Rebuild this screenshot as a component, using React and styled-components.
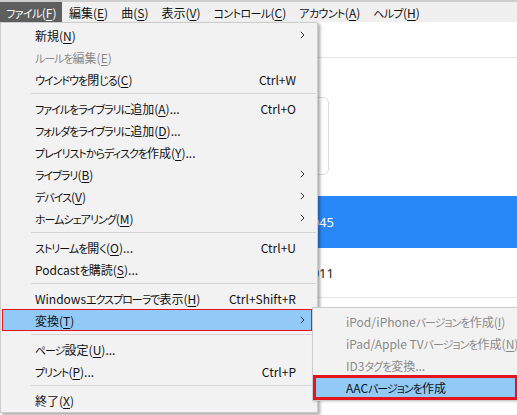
import styled, { createGlobalStyle } from 'styled-components';

const GlobalStyle = createGlobalStyle`
  html, body {
    margin: 0;
    padding: 0;
    background: #ffffff;
    overflow: hidden;
  }
  body {
    font-family: "Noto Sans CJK JP", "Noto Sans", sans-serif;
    font-size: 12px;
    font-feature-settings: "palt";
    color: #111;
  }
`;

const Window = styled.div`
  position: relative;
  width: 517px;
  height: 415px;
  display: flex;
  flex-direction: column;
  overflow: hidden;
  background: #fff;
`;

const TopStrip = styled.div`
  height: 2px;
  background: #cdcdcd;
`;

const MenuBar = styled.div`
  display: flex;
  height: 20px;
  background: #f0f0f0;
`;

const BarItem = styled.div`
  display: flex;
  align-items: center;
  padding: 0 ${p => p.$pad || '6.5px'};
  background: ${p => (p.$open ? '#5e5e5e' : 'transparent')};
  color: ${p => (p.$open ? '#fff' : '#111')};
  white-space: nowrap;
`;

const Toolbar = styled.div`
  height: 35px;
  border-bottom: 1px solid #e4e4e4;
`;

const InfoArea = styled.div`
  height: 138px;
  padding-top: 39px;
  box-sizing: border-box;
`;

const InfoBox = styled.div`
  width: 320px;
  height: 78px;
  margin-left: 9px;
  box-sizing: border-box;
  border: 1px solid #dcdcdc;
  border-radius: 6px;
`;

const ListRow = styled.div`
  height: ${p => p.$h}px;
  display: flex;
  align-items: center;
  box-sizing: border-box;
  background: ${p => (p.$selected ? '#2988f7' : '#fff')};
  color: ${p => (p.$selected ? '#fff' : '#222')};
  border-bottom: 1px solid ${p => (p.$selected ? '#2988f7' : '#e6e6e6')};
  font-family: "Noto Sans", sans-serif;
  font-size: 13px;
`;

const ListCell = styled.div`
  width: 334px;
  text-align: right;
  white-space: nowrap;
`;

const Menu = styled.div`
  position: absolute;
  left: 0;
  top: 22px;
  width: 318px;
  box-sizing: border-box;
  padding: 1px 1px;
  background: #f2f2f2;
  border: 1px solid #cccccc;
  box-shadow: 2px 2px 3px rgba(0, 0, 0, 0.35);
`;

const SubMenu = styled(Menu)`
  left: 312px;
  top: 307px;
  width: 210px;
  padding: 2px 0;
  box-shadow: 1px 1px 2px rgba(0, 0, 0, 0.15);
`;

const Row = styled.div`
  position: relative;
  height: 22px;
  display: flex;
  align-items: center;
  padding-left: 33px;
  white-space: nowrap;
  background: ${p => (p.$active ? '#91c9f7' : 'transparent')};
  color: ${p => (p.$disabled ? '#8a8a8a' : '#111')};

  &::after {
    content: '';
    display: ${p => (p.$mark ? 'block' : 'none')};
    position: absolute;
    top: ${p => (p.$mark === 'thick' ? '-1px' : '0')};
    bottom: ${p => (p.$mark === 'thick' ? '-2px' : '0')};
    left: 0;
    right: ${p => (p.$mark === 'thick' ? '3px' : '4px')};
    border: ${p => (p.$mark === 'thick' ? '3px' : '1px')} solid #e3141e;
  }
`;

const Shortcut = styled.span`
  margin-left: auto;
`;

const ArrowCell = styled.span`
  width: 20px;
  flex-shrink: 0;
  display: flex;
  align-items: center;
  padding-left: 4px;
  box-sizing: border-box;
`;

const Separator = styled.div`
  height: 7px;
  display: flex;
  align-items: center;
  padding-left: 29px;

  &::before {
    content: '';
    flex: 1;
    height: 1px;
    background: #d5d5d5;
  }
`;

const Key = styled.u`
  text-underline-offset: 2px;
`;

// kana in the original UI font are narrower than Noto's, so tighten them
const Kana = styled.span`
  font-size: 11px;
  letter-spacing: ${p => (p.$loose ? '-0.6px' : '-1px')};
`;

const Chevron = () => (
  <svg width="5" height="8" viewBox="0 0 5 8">
    <path d="M0.8 0.8 L4 4 L0.8 7.2" fill="none" stroke="#333" strokeWidth="1" />
  </svg>
);

const withKana = (text, loose) =>
  text.split(/([\u3040-\u30ff]+)/).map((part, i) =>
    /[\u3040-\u30ff]/.test(part) ? (
      <Kana key={i} $loose={loose}>
        {part}
      </Kana>
    ) : (
      part
    )
  );

const Label = ({ text, k, dots, loose }) => (
  <span>
    {withKana(text, loose)}
    {k && (
      <>
        (<Key>{k}</Key>)
      </>
    )}
    {dots && '...'}
  </span>
);

const barItems = [
  ['ファイル', 'F'],
  ['編集', 'E'],
  ['曲', 'S'],
  ['表示', 'V'],
  ['コントロール', 'C'],
  ['アカウント', 'A'],
  ['ヘルプ', 'H'],
];

const fileItems = [
  { label: '新規', k: 'N', sub: true },
  { label: 'ルールを編集', k: 'E', disabled: true },
  { label: 'ウインドウを閉じる', k: 'C', shortcut: 'Ctrl+W' },
  'sep',
  { label: 'ファイルをライブラリに追加', k: 'A', dots: true, shortcut: 'Ctrl+O' },
  { label: 'フォルダをライブラリに追加', k: 'D', dots: true },
  { label: 'プレイリストからディスクを作成', k: 'Y', dots: true },
  { label: 'ライブラリ', k: 'B', sub: true },
  { label: 'デバイス', k: 'V', sub: true },
  { label: 'ホームシェアリング', k: 'M', sub: true },
  'sep',
  { label: 'ストリームを開く', k: 'O', dots: true, shortcut: 'Ctrl+U' },
  { label: 'Podcastを購読', k: 'S', dots: true },
  'sep',
  { label: 'Windowsエクスプローラで表示', k: 'H', shortcut: 'Ctrl+Shift+R' },
  { label: '変換', k: 'T', sub: true, active: true, mark: 'thin' },
  'sep',
  { label: 'ページ設定', k: 'U', dots: true },
  { label: 'プリント', k: 'P', dots: true, shortcut: 'Ctrl+P' },
  'sep',
  { label: '終了', k: 'X' },
];

const convertItems = [
  { label: 'iPod/iPhoneバージョンを作成', k: 'I', disabled: true },
  { label: 'iPad/Apple TVバージョンを作成', k: 'N', disabled: true },
  { label: 'ID3タグを変換', dots: true, disabled: true },
  { label: 'AACバージョンを作成', active: true, mark: 'thick' },
];

const App = () => (
  <>
    <GlobalStyle />
    <Window>
      <TopStrip />
      <MenuBar>
        {barItems.map(([name, k], i) => (
          <BarItem key={name} $open={i === 0} $pad={i === 0 ? '6px' : undefined}>
            <Label text={name} k={k} loose />
          </BarItem>
        ))}
      </MenuBar>
      <Toolbar />
      <InfoArea>
        <InfoBox />
      </InfoArea>
      <ListRow $h={52} $selected>
        <ListCell>2:01:045</ListCell>
      </ListRow>
      <ListRow $h={50}>
        <ListCell>2:00:011</ListCell>
      </ListRow>

      <Menu>
        {fileItems.map((it, i) =>
          it === 'sep' ? (
            <Separator key={i} />
          ) : (
            <Row key={i} $disabled={it.disabled} $active={it.active} $mark={it.mark}>
              <Label text={it.label} k={it.k} dots={it.dots} />
              <Shortcut>{it.shortcut}</Shortcut>
              <ArrowCell>{it.sub && <Chevron />}</ArrowCell>
            </Row>
          )
        )}
      </Menu>

      <SubMenu>
        {convertItems.map((it, i) => (
          <Row key={i} $disabled={it.disabled} $active={it.active} $mark={it.mark}>
            <Label text={it.label} k={it.k} dots={it.dots} />
          </Row>
        ))}
      </SubMenu>
    </Window>
  </>
);

export default App;
